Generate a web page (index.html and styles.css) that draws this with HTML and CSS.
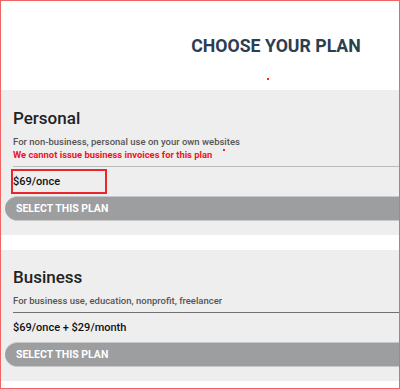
FILE: index.html
```html
<!DOCTYPE html>
<html>
<head>
<meta charset="utf-8">
<link rel="stylesheet" href="styles.css">
</head>
<body>
<div class="frame">
  <header class="header">
    <h1 class="title">CHOOSE YOUR PLAN</h1>
    <span class="dot dot-title"></span>
  </header>
  <section class="card">
    <h2 class="plan-name">Personal</h2>
    <p class="desc">For non-business, personal use on your own websites</p>
    <p class="warn">We cannot issue business invoices for this plan<span class="dot dot-warn"></span></p>
    <div class="sep sep-light"></div>
    <div class="price price-marked">$69/once</div>
    <button class="select">SELECT THIS PLAN</button>
  </section>
  <section class="card card-second">
    <h2 class="plan-name">Business</h2>
    <p class="desc">For business use, education, nonprofit, freelancer</p>
    <div class="sep sep-dark"></div>
    <div class="price">$69/once + $29/month</div>
    <button class="select">SELECT THIS PLAN</button>
  </section>
</div>
</body>
</html>
```
FILE: styles.css
```css
* { box-sizing: border-box; }
html, body { margin: 0; padding: 0; background: #fff; }
body { font-family: Roboto, "Liberation Sans", sans-serif; }

.frame {
  width: 400px;
  height: 389px;
  border: 1px solid #f06464;
  overflow: hidden;
  display: flex;
  flex-direction: column;
}

.header {
  height: 89px;
  padding: 35px 0 0 152px;
  display: flex;
  flex-direction: column;
}
.title {
  margin: 0;
  font-size: 17.7px;
  line-height: 20px;
  font-weight: 700;
  color: #2c3e50;
  text-align: center;
}
.dot {
  display: block;
  width: 2px;
  height: 2px;
  background: #f22;
}
.dot-title { margin: 22px 0 0 114px; }
.dot-warn { display: inline-block; vertical-align: top; margin: 1px 0 0 11px; }

.card {
  background: #eeeeee;
  padding: 18px 0 14px 12px;
  overflow: hidden;
  display: flex;
  flex-direction: column;
}
.card-second { margin-top: 15px; padding-top: 17px; }

.plan-name {
  margin: 0;
  font-size: 17px;
  line-height: 20px;
  font-weight: 500;
  color: #222;
}
.desc, .warn {
  margin: 0;
  font-size: 9.5px;
  line-height: 13px;
  font-weight: 500;
  white-space: nowrap;
}
.desc { color: #555; margin-top: 7px; }
.warn { color: #f0141e; font-weight: 700; font-size: 9.4px; }

.sep { height: 1px; margin-top: 5px; }
.sep-light { background: #bbb; }
.sep-dark { background: #707070; }

.price {
  height: 25px;
  margin-top: 2px;
  font-size: 11px;
  line-height: 25px;
  font-weight: 500;
  color: #111;
  white-space: nowrap;
}
.price-marked {
  width: 96px;
  margin-left: -2px;
  border: 2px solid #e8262c;
  line-height: 21px;
}

.select {
  margin: 2px 0 0 -8px;
  width: calc(100% + 40px);
  height: 25px;
  border: none;
  border-top: 1px solid #c8c8c8;
  border-bottom: 1px solid #c8c8c8;
  border-radius: 13px 0 0 13px;
  background: #9d9e9f;
  color: #fff;
  font-family: Roboto, "Liberation Sans", sans-serif;
  font-size: 10.5px;
  font-weight: 700;
  text-align: left;
  padding: 0 0 0 11px;
  line-height: 23px;
}
```
